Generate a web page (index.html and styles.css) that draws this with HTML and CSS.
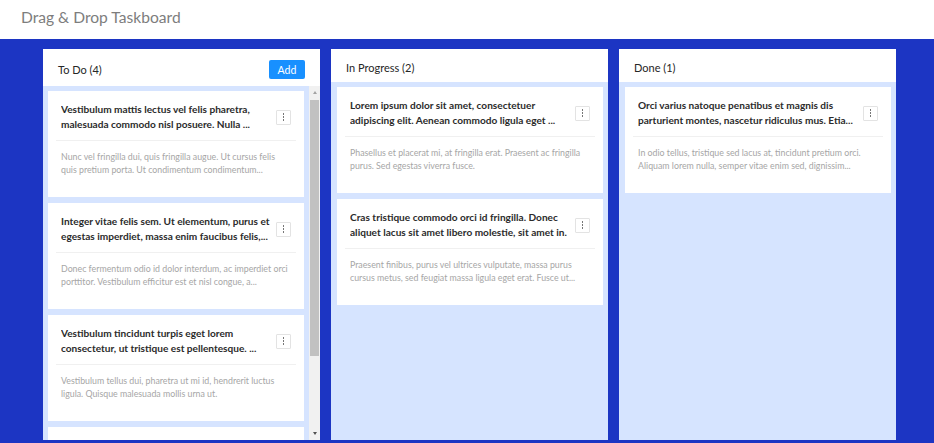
FILE: index.html
```html
<!DOCTYPE html>
<html>
<head>
<meta charset="utf-8">
<link rel="stylesheet" href="styles.css">
</head>
<body>
<header class="topbar"><h1 class="app-title">Drag &amp; Drop Taskboard</h1></header>
<main class="board">
  <section class="column">
    <div class="col-head"><span class="col-title">To Do (4)</span><button class="add-btn">Add</button></div>
    <div class="col-body-row">
      <div class="col-body list">
        <div class="card">
          <div class="card-top"><div class="card-title">Vestibulum mattis lectus vel felis pharetra, malesuada commodo nisl posuere. Nulla ...</div><span class="menu"><i></i><i></i><i></i></span></div>
          <div class="card-desc">Nunc vel fringilla dui, quis fringilla augue. Ut cursus felis quis pretium porta. Ut condimentum condimentum...</div>
        </div>
        <div class="card">
          <div class="card-top"><div class="card-title">Integer vitae felis sem. Ut elementum, purus et egestas imperdiet, massa enim faucibus felis,...</div><span class="menu"><i></i><i></i><i></i></span></div>
          <div class="card-desc">Donec fermentum odio id dolor interdum, ac imperdiet orci porttitor. Vestibulum efficitur est et nisl congue, a...</div>
        </div>
        <div class="card">
          <div class="card-top"><div class="card-title">Vestibulum tincidunt turpis eget lorem consectetur, ut tristique est pellentesque. ...</div><span class="menu"><i></i><i></i><i></i></span></div>
          <div class="card-desc">Vestibulum tellus dui, pharetra ut mi id, hendrerit luctus ligula. Quisque malesuada mollis urna ut.</div>
        </div>
        <div class="card">
          <div class="card-top"><div class="card-title">Sed ut perspiciatis unde omnis iste natus error sit voluptatem accusantium ...</div><span class="menu"><i></i><i></i><i></i></span></div>
          <div class="card-desc">Nemo enim ipsam voluptatem quia voluptas sit aspernatur aut odit aut fugit.</div>
        </div>
      </div>
      <div class="scrollbar" aria-hidden="true">
        <span class="sb-btn"><b class="arrow-up"></b></span>
        <span class="sb-track"><span class="sb-thumb"></span></span>
        <span class="sb-btn"><b class="arrow-down"></b></span>
      </div>
    </div>
  </section>
  <section class="column">
    <div class="col-head"><span class="col-title">In Progress (2)</span></div>
    <div class="col-body wide">
      <div class="card">
        <div class="card-top"><div class="card-title">Lorem ipsum dolor sit amet, consectetuer adipiscing elit. Aenean commodo ligula eget ...</div><span class="menu"><i></i><i></i><i></i></span></div>
        <div class="card-desc">Phasellus et placerat mi, at fringilla erat. Praesent ac fringilla purus. Sed egestas viverra fusce.</div>
      </div>
      <div class="card">
        <div class="card-top"><div class="card-title">Cras tristique commodo orci id fringilla. Donec aliquet lacus sit amet libero molestie, sit amet in.</div><span class="menu"><i></i><i></i><i></i></span></div>
        <div class="card-desc">Praesent finibus, purus vel ultrices vulputate, massa purus cursus metus, sed feugiat massa ligula eget erat. Fusce ut...</div>
      </div>
    </div>
  </section>
  <section class="column">
    <div class="col-head"><span class="col-title">Done (1)</span></div>
    <div class="col-body wide">
      <div class="card">
        <div class="card-top"><div class="card-title">Orci varius natoque penatibus et magnis dis parturient montes, nascetur ridiculus mus. Etia...</div><span class="menu"><i></i><i></i><i></i></span></div>
        <div class="card-desc">In odio tellus, tristique sed lacus at, tincidunt pretium orci. Aliquam lorem nulla, semper vitae enim sed, dignissim...</div>
      </div>
    </div>
  </section>
</main>
</body>
</html>
```
FILE: styles.css
```css
* { box-sizing: border-box; }
html, body { margin: 0; padding: 0; height: 100%; }
body {
  font-family: Lato, "Noto Sans", sans-serif;
  background: #1c35c3;
  display: flex;
  flex-direction: column;
  overflow: hidden;
}
.topbar {
  background: #fff;
  height: 39px;
  flex: none;
  display: flex;
  align-items: center;
  padding-left: 21px;
}
.app-title {
  margin: 0 0 5px;
  font-size: 15.6px;
  font-weight: 400;
  color: #7d7d7d;
}
.board {
  flex: 1;
  display: flex;
  gap: 11px;
  padding: 10px 0 3px 43px;
  min-height: 0;
}
.column {
  width: 277px;
  display: flex;
  flex-direction: column;
  background: #d6e4ff;
  min-height: 0;
}
.col-head {
  background: #fff;
  display: flex;
  align-items: center;
  justify-content: space-between;
  padding: 11px 15px 7px;
}
.col-title {
  font-size: 11px;
  color: #262626;
  line-height: 15px;
}
.add-btn {
  font: inherit;
  font-size: 10.5px;
  color: #fff;
  background: #1890ff;
  border: none;
  border-radius: 2px;
  width: 36px;
  height: 19px;
  padding: 0;
}
.col-body-row {
  flex: 1;
  min-height: 0;
  display: flex;
}
.col-body {
  flex: 1;
  min-height: 0;
  padding: 5px;
  display: flex;
  flex-direction: column;
  gap: 6px;
  overflow: hidden;
}
.col-body.wide { padding: 5px 5px 5px 6px; gap: 6px; }
.scrollbar {
  flex: none;
  width: 11px;
  background: #f1f1f1;
  display: flex;
  flex-direction: column;
}
.sb-btn {
  flex: none;
  height: 13px;
  display: flex;
  align-items: center;
  justify-content: center;
}
.arrow-up, .arrow-down {
  width: 0;
  height: 0;
  border-left: 2.5px solid transparent;
  border-right: 2.5px solid transparent;
}
.arrow-up { border-bottom: 3px solid #a3a3a3; }
.arrow-down { border-top: 3px solid #505050; }
.sb-track {
  flex: 1;
  padding: 1px 1px 0;
}
.sb-thumb {
  display: block;
  height: 256px;
  background: #c1c1c1;
}
.card {
  flex: none;
  background: #fff;
  height: 106px;
  padding: 0 8px;
}
.card-top {
  display: flex;
  align-items: center;
  gap: 3px;
  padding: 11px 5px 8px;
  border-bottom: 1px solid #f0f0f0;
}
.card-title {
  flex: 1;
  font-size: 10.1px;
  font-weight: 700;
  line-height: 15px;
  color: #2b2b2b;
  display: -webkit-box;
  -webkit-line-clamp: 2;
  -webkit-box-orient: vertical;
  overflow: hidden;
  height: 30px;
}
.menu {
  flex: none;
  width: 15px;
  height: 15px;
  border: 1px solid #e3e3e3;
  border-radius: 1px;
  display: flex;
  flex-direction: column;
  align-items: center;
  justify-content: center;
  gap: 1.5px;
}
.menu i {
  display: block;
  width: 1.5px;
  height: 1.5px;
  background: #777;
}
.card-desc {
  padding: 9px 5px 0;
  font-size: 8.8px;
  line-height: 13px;
  color: #a6a6a6;
  display: -webkit-box;
  -webkit-line-clamp: 2;
  -webkit-box-orient: vertical;
  overflow: hidden;
}
```
